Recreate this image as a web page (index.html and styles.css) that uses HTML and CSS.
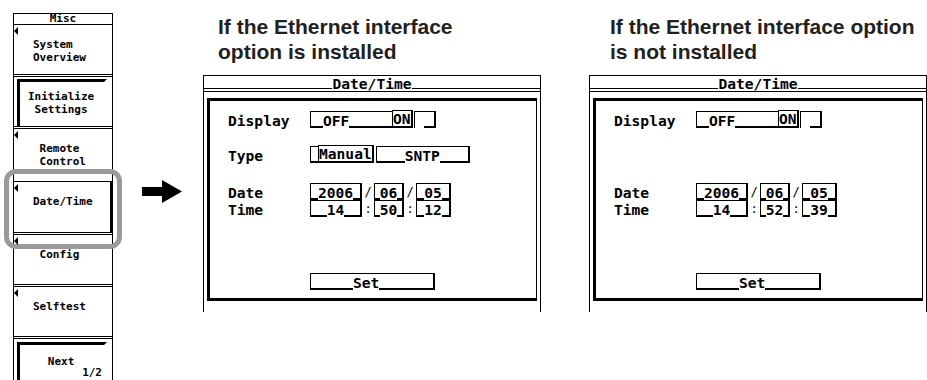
FILE: index.html
```html
<!DOCTYPE html>
<html lang="en">
<head>
  <meta charset="UTF-8" />
  <title>Date/Time menu</title>
  <link rel="stylesheet" href="styles.css">
</head>
<body>

  <div class="page">

    <!-- soft key menu -->
    <div class="menu">
      <div class="menu-title">Misc</div>
      <div class="key arrowed">System
Overview</div>
      <div class="key key-framed"><div class="raised">Initialize
 Settings</div></div>
      <div class="key arrowed key-remote"> Remote
 Control</div>
      <div class="key arrowed key-date">Date/Time</div>
      <div class="key arrowed"> Config</div>
      <div class="key arrowed">Selftest</div>
      <div class="key key-framed key-next"><div class="raised">   Next<div class="page-no">1/2</div></div></div>
    </div>

    <svg class="pointer" width="40" height="23" viewBox="0 0 40 23">
      <polygon points="0,7 20,7 20,0 40,11.5 20,23 20,16 0,16" fill="#000"/>
    </svg>

    <!-- with ethernet option -->
    <div class="shot shot-a">
      <div class="caption">If the Ethernet interface<br>option is installed</div>
      <div class="screen-title">Date/Time</div>
      <div class="screen-body">
        <div class="frame">
          <div class="row">
            <span class="label">Display</span>
            <span class="box box-off">OFF</span><span class="sel">ON</span><span class="box box-blank"></span>
          </div>
          <div class="row row-type">
            <span class="label">Type</span>
            <span class="box box-lead"></span><span class="sel">Manual</span><span class="box box-sntp">SNTP</span>
          </div>
          <div class="row row-date">
            <span class="label">Date</span>
            <span class="box box-year">2006</span><span class="sep">/</span><span class="box box-mon">06</span><span class="sep">/</span><span class="box box-day">05</span>
          </div>
          <div class="row">
            <span class="label">Time</span>
            <span class="box box-year">14</span><span class="sep">:</span><span class="box box-mon">50</span><span class="sep">:</span><span class="box box-day">12</span>
          </div>
          <div class="row row-set">
            <span class="label"></span>
            <span class="box box-set">Set</span>
          </div>
        </div>
      </div>
    </div>

    <!-- without ethernet option -->
    <div class="shot shot-b">
      <div class="caption">If the Ethernet interface option<br>is not installed</div>
      <div class="screen-title">Date/Time</div>
      <div class="screen-body">
        <div class="frame">
          <div class="row">
            <span class="label">Display</span>
            <span class="box box-off">OFF</span><span class="sel">ON</span><span class="box box-blank"></span>
          </div>
          <div class="row row-date wide">
            <span class="label">Date</span>
            <span class="box box-year">2006</span><span class="sep">/</span><span class="box box-mon">06</span><span class="sep">/</span><span class="box box-day">05</span>
          </div>
          <div class="row">
            <span class="label">Time</span>
            <span class="box box-year">14</span><span class="sep">:</span><span class="box box-mon">52</span><span class="sep">:</span><span class="box box-day">39</span>
          </div>
          <div class="row row-set">
            <span class="label"></span>
            <span class="box box-set">Set</span>
          </div>
        </div>
      </div>
    </div>

  </div>

</body>
</html>
```

FILE: styles.css
```css
body {
  margin: 0;
  width: 927px;
  height: 380px;
  overflow: hidden;
  background: #fff;
  color: #000;
  font-family: "DejaVu Sans Mono", monospace;
  font-weight: bold;
}

.page {
  display: flex;
  align-items: flex-start;
  height: 380px;
}

/* soft key menu */
.menu {
  flex: none;
  margin: 13px 0 0 13px;
  width: 100px;
  height: 367px;
  box-sizing: border-box;
  border-left: 1px solid #000;
  border-right: 1px solid #000;
  font-size: 11px;
  line-height: 13px;
}

.menu-title {
  height: 12px;
  box-sizing: border-box;
  border-top: 1px solid #000;
  border-bottom: 1px solid #000;
  text-align: center;
  line-height: 10px;
}

.key {
  position: relative;
  height: 52px;
  box-sizing: border-box;
  border-bottom: 3px double #000;
  padding: 13px 0 0 19px;
  white-space: pre;
}

.key.arrowed::before {
  content: "";
  position: absolute;
  left: 0;
  top: 2px;
  border-style: solid;
  border-color: transparent #000 transparent transparent;
  border-width: 4px 4px 4px 0;
}

.key-framed {
  padding: 2px 5px 0 3px;
}

.key-framed .raised {
  height: 100%;
  box-sizing: border-box;
  border-top: 3px solid #000;
  border-left: 3px solid #000;
  border-right: 3px solid transparent;
  padding: 8px 0 0 8px;
}

.key-remote {
  border-bottom: none;
}

.key-date {
  height: 54px;
  border-top: 1px solid #000;
  box-shadow: inset -2px 0 0 #000;
}

.key-date::after {
  content: "";
  position: absolute;
  left: -10px;
  top: -13px;
  width: 118px;
  height: 80px;
  box-sizing: border-box;
  border: 5px solid #9a9a9a;
  border-radius: 12px;
}

.key-next {
  height: 41px;
  border-bottom: none;
  padding-top: 3px;
}

.key-next .raised {
  padding-top: 10px;
}

.page-no {
  text-align: right;
  padding-right: 2px;
  line-height: 10px;
}

.pointer {
  flex: none;
  margin: 180px 0 0 29px;
}

/* screen shots */
.shot {
  flex: none;
  width: 338px;
}

.shot-a {
  margin-left: 21px;
}

.shot-b {
  margin-left: 48px;
}

.caption {
  margin: 14px 0 11px 15px;
  font: bold 21px/25px "Liberation Sans", Arial, sans-serif;
  color: #231f20;
  white-space: nowrap;
}

.shot-b .caption {
  margin-left: 21px;
}

.screen-title {
  display: flex;
  align-items: flex-end;
  height: 17px;
  box-sizing: border-box;
  border: 1px solid #000;
  font-size: 14.6px;
  line-height: 15px;
}

.screen-title::before,
.screen-title::after {
  content: "";
  flex: 1;
  margin-bottom: 2px;
  border-bottom: 1px solid #000;
}

.screen-body {
  height: 220px;
  box-sizing: border-box;
  border: solid #000;
  border-width: 0 1px;
  padding: 6px 3px 0;
}

.frame {
  height: 203px;
  box-sizing: border-box;
  border: solid #000;
  border-width: 3px 1px 3px 3px;
  padding-top: 10px;
  font-size: 14.6px;
}

.row {
  display: flex;
  align-items: flex-end;
  height: 17px;
}

.row-type {
  margin-top: 18px;
}

.row-date {
  margin-top: 20px;
}

.row-date.wide {
  margin-top: 55px;
}

.row-set {
  margin-top: 56px;
}

.label {
  flex: none;
  width: 100px;
  box-sizing: border-box;
  padding-left: 18px;
  line-height: 15px;
}

.box {
  flex: none;
  display: flex;
  align-items: flex-end;
  height: 17px;
  box-sizing: border-box;
  border: solid #000;
  border-width: 1px 2px 0 1px;
  line-height: 15px;
}

.box::before,
.box::after {
  content: "";
  flex: 1;
  border-bottom: 2px solid #000;
}

.sel {
  flex: none;
  height: 18px;
  box-sizing: border-box;
  border: solid #000;
  border-width: 1px 2px 2px 1px;
  line-height: 16px;
}

.box-off {
  width: 82px;
  border-right: none;
}

.box-off::before {
  flex: 0 0 12px;
}

.box-blank {
  width: 22px;
  margin-left: 1px;
}

.box-blank::before {
  border-bottom-color: transparent;
}

.box-lead {
  width: 8px;
  border-right: none;
}

.box-sntp {
  width: 94px;
  margin-left: 2px;
}

.box-year {
  width: 52px;
}

.box-mon {
  width: 30px;
}

.box-day {
  width: 35px;
}

.sep {
  flex: none;
  width: 12px;
  text-align: center;
  font-weight: normal;
  font-size: 12px;
  line-height: 15px;
}

.box-set {
  width: 125px;
}

.box-set::before {
  flex: 0 0 42px;
}
```
